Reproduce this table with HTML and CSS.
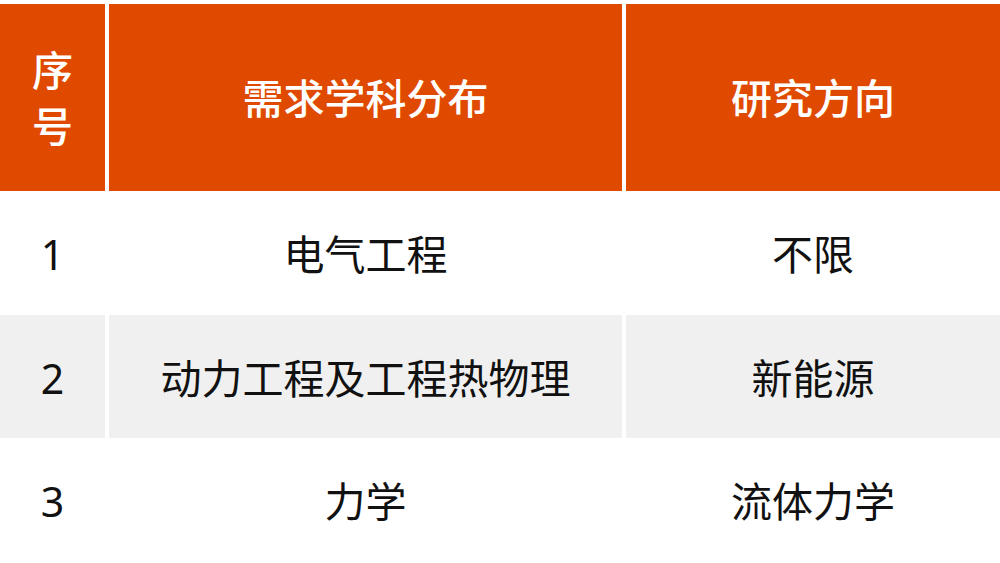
FILE: index.html
```html
<!DOCTYPE html>
<html lang="zh">
<head>
<meta charset="utf-8">
<link rel="stylesheet" href="styles.css">
</head>
<body>
<div class="table">
  <div class="cell head col1"><span class="narrow">序号</span></div>
  <div class="cell head">需求学科分布</div>
  <div class="cell head">研究方向</div>

  <div class="cell">1</div>
  <div class="cell">电气工程</div>
  <div class="cell">不限</div>

  <div class="cell alt">2</div>
  <div class="cell alt">动力工程及工程热物理</div>
  <div class="cell alt">新能源</div>

  <div class="cell">3</div>
  <div class="cell">力学</div>
  <div class="cell">流体力学</div>
</div>
</body>
</html>
```

FILE: styles.css
```css
html, body {
  margin: 0;
  padding: 0;
  background: #ffffff;
}
body {
  width: 1000px;
  height: 563px;
  overflow: hidden;
  font-family: "Noto Sans", "Noto Sans CJK SC", sans-serif;
  color: #111111;
}
.table {
  display: grid;
  grid-template-columns: 105px 513px 374px;
  grid-template-rows: 187px 124px 123px 123px;
  column-gap: 4px;
  padding-top: 4px;
}
.cell {
  display: flex;
  align-items: center;
  justify-content: center;
  font-size: 41px;
  line-height: 56px;
  text-align: center;
  padding-top: 2px;
}
.head {
  background: #e04a00;
  color: #ffffff;
  font-weight: 500;
  padding-top: 0;
}
.narrow {
  width: 44px;
  display: block;
}
.alt {
  background: #f0f0f0;
}
```
